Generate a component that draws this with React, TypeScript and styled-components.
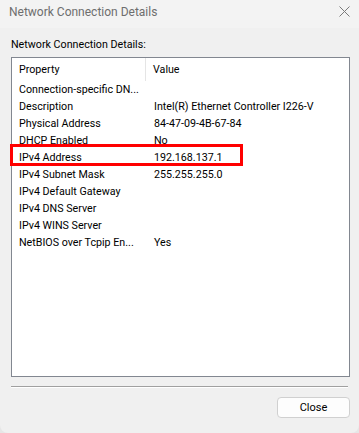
import styled, { createGlobalStyle } from 'styled-components';

const rows = [
  { name: 'Connection-specific DN...', value: '' },
  { name: 'Description', value: 'Intel(R) Ethernet Controller I226-V' },
  { name: 'Physical Address', value: '84-47-09-4B-67-84' },
  { name: 'DHCP Enabled', value: 'No' },
  { name: 'IPv4 Address', value: '192.168.137.1' },
  { name: 'IPv4 Subnet Mask', value: '255.255.255.0' },
  { name: 'IPv4 Default Gateway', value: '' },
  { name: 'IPv4 DNS Server', value: '' },
  { name: 'IPv4 WINS Server', value: '' },
  { name: 'NetBIOS over Tcpip En...', value: 'Yes' },
];

const GlobalStyle = createGlobalStyle`
  html, body {
    margin: 0;
    padding: 0;
    background: #e6e6e6;
  }
  body {
    font-family: Roboto, "Liberation Sans", sans-serif;
    font-size: 10.7px;
  }
`;

export default function App() {
  return (
    <>
      <GlobalStyle />
      <Window>
        <TitleBar>
          <Title>Network Connection Details</Title>
          <CloseX>
            <svg width="11" height="11" viewBox="0 0 11 11">
              <path d="M0.5 0.5 L10.5 10.5 M10.5 0.5 L0.5 10.5" stroke="#7a7a7a" strokeWidth="1" />
            </svg>
          </CloseX>
        </TitleBar>
        <Body>
          <Label>Network Connection Details:</Label>
          <ListBox>
            <HeaderRow>
              <HeaderCell>Property</HeaderCell>
              <HeaderCell $last>Value</HeaderCell>
            </HeaderRow>
            {rows.map((r) => (
              <Row key={r.name}>
                <Cell>{r.name}</Cell>
                <Cell $value>{r.value}</Cell>
              </Row>
            ))}
          </ListBox>
          <Separator />
          <Footer>
            <Button>Close</Button>
          </Footer>
        </Body>
        <Highlight />
      </Window>
    </>
  );
}

const Window = styled.div`
  position: relative;
  width: 359px;
  height: 433px;
  background: #f0f0f0;
  border-radius: 0 0 8px 8px;
  display: flex;
  flex-direction: column;
  overflow: hidden;
  color: #000;
`;

const TitleBar = styled.div`
  height: 28px;
  background: #f3f3f3;
  display: flex;
  align-items: center;
  justify-content: space-between;
  padding: 0 9px 0 9px;
  box-sizing: border-box;
`;

const Title = styled.div`
  color: #6e6e6e;
  font-size: 12px;
  margin-top: -4px;
`;

const CloseX = styled.div`
  display: flex;
  margin-top: -5px;
`;

const Body = styled.div`
  flex: 1;
  display: flex;
  flex-direction: column;
  padding: 9px 9px 0 11px;
`;

const Label = styled.div`
  height: 20px;
  line-height: 16px;
`;

const ListBox = styled.div`
  height: 318px;
  border: 1px solid #828790;
  background: #fff;
  display: flex;
  flex-direction: column;
`;

const HeaderRow = styled.div`
  display: flex;
  height: 23px;
  align-items: stretch;
`;

const HeaderCell = styled.div<{ $last?: boolean }>`
  display: flex;
  align-items: center;
  width: ${(p) => (p.$last ? 'auto' : '134px')};
  flex: ${(p) => (p.$last ? '1' : 'none')};
  padding-left: 7px;
  box-sizing: border-box;
  border-right: ${(p) => (p.$last ? 'none' : '1px solid #e5e5e5')};
`;

const Row = styled.div`
  display: flex;
  height: 17px;
  align-items: center;
`;

const Cell = styled.div<{ $value?: boolean }>`
  width: ${(p) => (p.$value ? 'auto' : '135px')};
  flex: ${(p) => (p.$value ? '1' : 'none')};
  padding-left: 7px;
  box-sizing: border-box;
  white-space: nowrap;
`;

const Separator = styled.div`
  margin: 9px 2px 0 0;
  height: 1px;
  background: #a0a0a0;
  border-bottom: 1px solid #fff;
`;

const Footer = styled.div`
  display: flex;
  justify-content: flex-end;
  padding-top: 9px;
`;

const Button = styled.button`
  width: 73px;
  height: 21px;
  border: 1px solid #d0d0d0;
  border-radius: 4px;
  background: #fdfdfd;
  font-family: inherit;
  font-size: 11px;
  color: #000;
  padding: 0;
`;

const Highlight = styled.div`
  position: absolute;
  left: 10px;
  top: 144px;
  width: 233px;
  height: 22px;
  box-sizing: border-box;
  border: 3px solid #ff0000;
  pointer-events: none;
`;
